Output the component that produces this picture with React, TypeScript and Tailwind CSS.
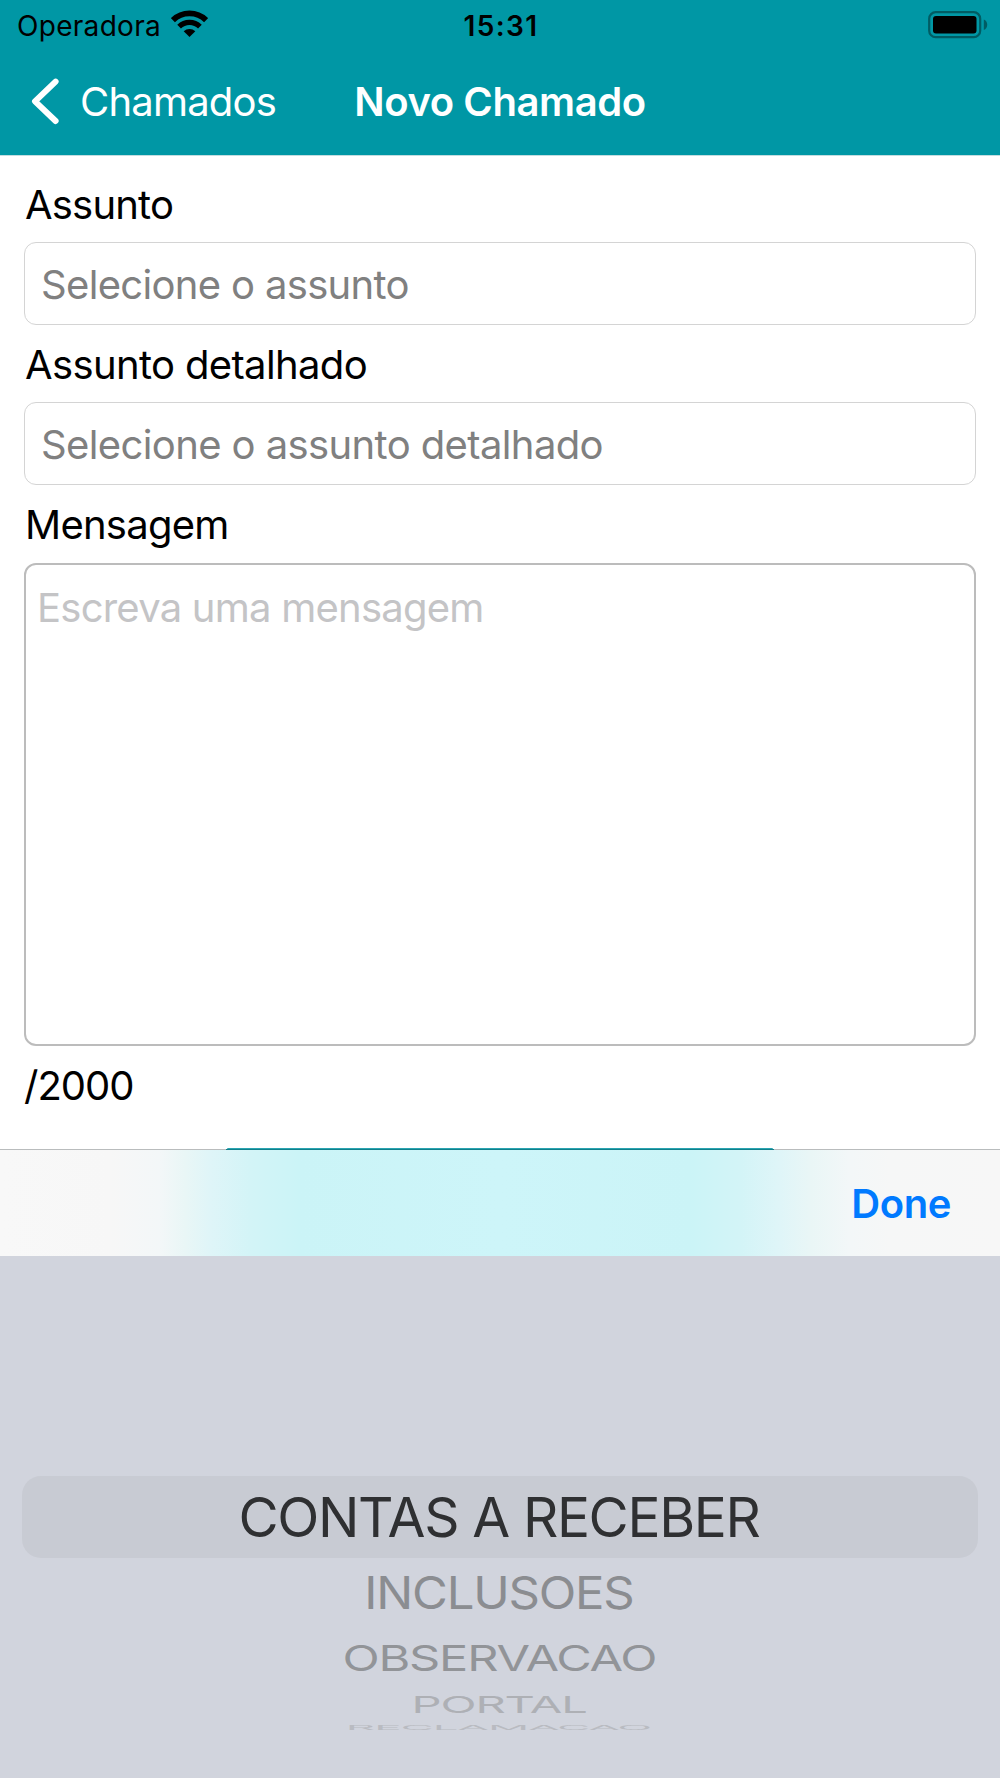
import React, { useState } from 'react';

interface PickerOption {
    label: string;
    rowClass: string;
    textClass: string;
}

const options: PickerOption[] = [
    {
        label: 'CONTAS A RECEBER',
        rowClass: 'h-[82px] mx-[22px] rounded-[19px] bg-[#c8cbd3]',
        textClass: 'text-[#2f3032]',
    },
    {
        label: 'INCLUSOES',
        rowClass: 'h-[69px] pt-[2px]',
        textClass: 'text-[#8b8d91] scale-x-[0.892] scale-y-[0.82]',
    },
    {
        label: 'OBSERVACAO',
        rowClass: 'h-[62px]',
        textClass: 'text-[#929498] scale-x-[0.885] scale-y-[0.65]',
    },
    {
        label: 'PORTAL',
        rowClass: 'h-[30px]',
        textClass: 'text-[#aeb0b5] scale-x-[0.857] scale-y-[0.42]',
    },
    {
        label: 'RECLAMACAO',
        rowClass: 'h-[17px]',
        textClass: 'text-[#b9bbc1] scale-x-[0.832] scale-y-[0.12]',
    },
];

const WifiIcon: React.FC = () => (
    <svg width="37" height="27" viewBox="0 0 37 27" fill="none" stroke="black">
        <path d="M1.9 10.2A23.6 23.6 0 0 1 35.1 10.2" strokeWidth="5.8" />
        <path d="M8.1 16.6A14.7 14.7 0 0 1 28.9 16.6" strokeWidth="5.2" />
        <path d="M18.5 27L12.7 21.3A8.3 8.3 0 0 1 24.3 21.3Z" fill="black" stroke="none" />
    </svg>
);

const BatteryIcon: React.FC = () => (
    <svg width="60" height="28" viewBox="0 0 60 28">
        <rect x="1.2" y="1.2" width="51" height="25" rx="6.5" fill="none" stroke="#005c63" strokeWidth="2.2" />
        <rect x="5" y="5" width="43.5" height="17.6" rx="3" fill="black" />
        <path d="M55.8 8.5C58 9.3 59.2 11.2 59.2 13.7C59.2 16.2 58 18.1 55.8 18.9Z" fill="#005c63" />
    </svg>
);

const StatusBar: React.FC = () => (
    <div className="h-[50px] pl-[17px] pr-[12px] flex items-center text-[28px] leading-[50px] text-black">
        <div className="flex-1 flex items-center gap-[10px]">
            <span className="pt-px tracking-[0.3px]">Operadora</span>
            <div className="pb-1">
                <WifiIcon />
            </div>
        </div>
        <span className="pt-px pr-[3px] font-semibold tracking-[1.4px]">15:31</span>
        <div className="flex-1 flex justify-end pb-px">
            <BatteryIcon />
        </div>
    </div>
);

const NavBar: React.FC = () => (
    <div className="h-[105px] px-[30px] pb-[1px] flex items-center text-white text-[40px] leading-[102px]">
        <button className="flex-1 flex items-center gap-[21px] tracking-[-0.8px] h-[103px]">
            <svg className="mb-[2px]" width="29" height="47" viewBox="0 0 29 47" fill="none" stroke="white" strokeWidth="6" strokeLinecap="round" strokeLinejoin="round">
                <path d="M25.6 3.6L5 23.3L25.6 43" />
            </svg>
            Chamados
        </button>
        <h1 className="font-semibold tracking-[-0.41px]">Novo Chamado</h1>
        <div className="flex-1" />
    </div>
);

const NovoChamado: React.FC = () => {
    const [message, setMessage] = useState('');

    return (
        <div className="w-[1000px] h-[1778px] flex flex-col overflow-hidden bg-white font-['Inter',sans-serif] text-[40px] leading-[48px] text-black">
            <header className="bg-[#0097a5] border-b border-[#c3dde0]">
                <StatusBar />
                <NavBar />
            </header>

            {/* Form */}
            <main className="h-[993px] px-6 flex flex-col">
                <label className="h-[86px] pt-[25px] pl-px tracking-[-0.8px]">Assunto</label>
                <div className="h-[83px] px-4 pt-[2px] flex items-center border border-[#d4d4d4] rounded-[12px] text-[#808080] tracking-[-0.67px]">
                    Selecione o assunto
                </div>

                <label className="h-[77px] pt-[16px] pl-px tracking-[-0.64px]">Assunto detalhado</label>
                <div className="h-[83px] px-4 pt-[2px] flex items-center border border-[#d4d4d4] rounded-[12px] text-[#808080] tracking-[-0.61px]">
                    Selecione o assunto detalhado
                </div>

                <label className="h-[78px] pt-[16px] pl-px tracking-[-0.75px]">Mensagem</label>
                <textarea
                    className="h-[483px] pt-[19px] px-[11px] resize-none outline-none border-2 border-[#bcbcbc] rounded-[12px] tracking-[-0.76px] placeholder:text-[#c4c4c6] placeholder:opacity-100"
                    placeholder="Escreva uma mensagem"
                    value={message}
                    onChange={e => setMessage(e.target.value)}
                />
                <p className="pt-[16px] tracking-[-1px]">{message.length > 0 ? message.length : ''}/2000</p>

                {/* Submit button, only its top edge shows above the picker */}
                <div className="mt-auto mx-auto w-[546px] h-[1px] rounded-t-[2px] bg-[#2ba5b1]" />
            </main>

            {/* Picker toolbar */}
            <div className="h-[107px] pr-[49px] flex flex-col bg-[linear-gradient(90deg,#f8f8f8_0%,#f7f7f7_11%,#f3f7f8_16%,#e9f6f6_18.5%,#dff5f8_21%,#d3f4f7_25%,#cbf4f7_30%,#cdf5f9_50%,#cbf4f7_69%,#d3f4f7_74%,#dff5f8_78%,#e9f6f6_81%,#f3f7f8_85%,#f6f7f7_89%,#f7f7f7_100%)]">
                <div className="-mr-[49px] h-px shrink-0 bg-[#b9bcbd] flex justify-center">
                    <div className="w-[548px] h-px bg-[#107f8b]" />
                </div>
                <button className="ml-auto mt-[30px] font-semibold tracking-[-0.4px] text-[#007aff]">Done</button>
            </div>

            {/* Picker wheel */}
            <div className="flex-1 pt-[220px] bg-[#d1d4dd]">
                {options.map(option => (
                    <div key={option.label} className={`flex items-center justify-center pr-[2px] ${option.rowClass}`}>
                        <span className={`text-[55px] leading-none tracking-[-1.36px] ${option.textClass}`}>
                            {option.label}
                        </span>
                    </div>
                ))}
            </div>
        </div>
    );
};

export default NovoChamado;
